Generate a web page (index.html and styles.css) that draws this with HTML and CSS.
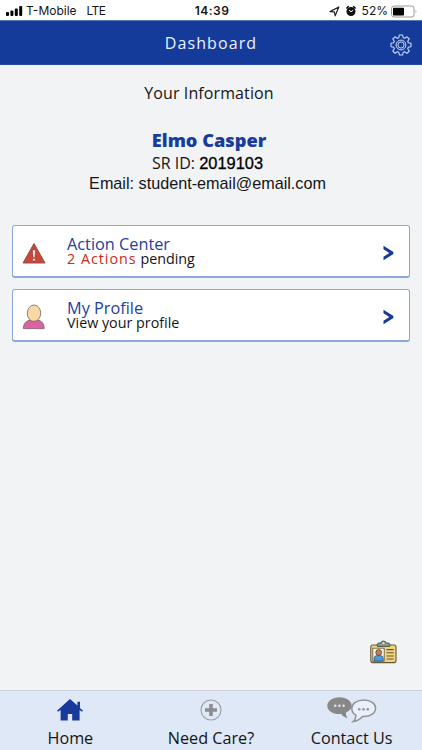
FILE: index.html
```
<!DOCTYPE html>
<html lang="en">
<head>
  <meta charset="UTF-8">
  <meta name="viewport" content="width=device-width, initial-scale=1">
  <title>Dashboard</title>
  <link rel="stylesheet" href="styles.css">
</head>
<body>
  <!-- phone status bar -->
  <div class="status-bar">
    <div class="status-left">
      <svg class="signal" width="17" height="10" viewBox="0 0 17 10">
        <rect x="0" y="6" width="3" height="4" rx="1"/>
        <rect x="4.4" y="4.5" width="3" height="5.5" rx="1"/>
        <rect x="8.8" y="2.5" width="3" height="7.5" rx="1"/>
        <rect x="13.2" y="0" width="3" height="10" rx="1"/>
      </svg>
      <span class="carrier">T-Mobile</span>
      <span class="network">LTE</span>
    </div>
    <div class="time">14:39</div>
    <div class="status-right">
      <svg width="11" height="11" viewBox="0 0 11 11">
        <path d="M1 5.6 L9.8 1 L6.2 9.8 L5.3 5.9 Z" fill="none" stroke="#222" stroke-width="1.2" stroke-linejoin="round"/>
      </svg>
      <svg class="alarm" width="12" height="12" viewBox="0 0 12 12">
        <circle cx="6" cy="6.5" r="4.5" fill="#111"/>
        <path d="M1.8 3 L3.4 1.6 M10.2 3 L8.6 1.6" stroke="#111" stroke-width="1.5" stroke-linecap="round"/>
        <path d="M4 5 L6 6.8 L8.2 5.2" fill="none" stroke="#fff" stroke-width="1"/>
      </svg>
      <span class="percent">52%</span>
      <svg width="27" height="13" viewBox="0 0 27 13">
        <rect x="0.5" y="1" width="22.5" height="11" rx="2.5" fill="#fff" stroke="#999"/>
        <rect x="2" y="2.7" width="11" height="7.8" rx="0.8" fill="#000"/>
        <path d="M24.6 4.8 Q26.4 6.5 24.6 8.2 Z" fill="#999"/>
      </svg>
    </div>
  </div>

  <header class="header">
    <h1>Dashboard</h1>
    <svg class="gear" width="22" height="22" viewBox="0 0 22 22" fill="none" stroke="#c9d8f7">
      <path stroke-width="1.1" stroke-linejoin="round" d="M9.3 1 H12.7 L13.2 3.7 L14.7 4.3 L17 2.8 L19.3 5 L17.7 7.3 L18.3 8.8 L21 9.3 V12.7 L18.3 13.2 L17.7 14.7 L19.3 17 L17 19.3 L14.7 17.7 L13.2 18.3 L12.7 21 H9.3 L8.8 18.3 L7.3 17.7 L5 19.3 L2.8 17 L4.3 14.7 L3.7 13.2 L1 12.7 V9.3 L3.7 8.8 L4.3 7.3 L2.8 5 L5 2.8 L7.3 4.3 L8.8 3.7 Z"/>
      <circle cx="11" cy="11" r="4.9" stroke-width="1"/>
      <circle cx="11" cy="11" r="3.1" stroke-width="1"/>
    </svg>
  </header>

  <main class="content">
    <h2>Your Information</h2>
    <div class="name">Elmo Casper</div>
    <div class="sr-id">SR ID: <span class="id-number">2019103</span></div>
    <div class="email">Email: student-email@email.com</div>

    <div class="cards">
      <a class="card" href="#">
        <svg class="card-icon warning" width="24" height="26" viewBox="0 0 24 26">
          <path d="M12 3.5 L23 23 H1 Z" fill="#d0453a" stroke="#7a4a44" stroke-width="0.9" stroke-linejoin="round"/>
          <path d="M10.6 10 H13.4 L12.9 17.4 H11.1 Z" fill="#fff" stroke="#7a3a34" stroke-width="0.5"/>
          <circle cx="12" cy="19.7" r="1.3" fill="#fff" stroke="#7a3a34" stroke-width="0.4"/>
        </svg>
        <div class="card-text">
          <div class="card-title">Action Center</div>
          <div class="card-sub"><span class="alert">2 Actions</span> pending</div>
        </div>
        <svg class="chevron" width="11" height="16" viewBox="0 0 11 16">
          <path d="M0.5 0.8 L10.4 7 V9 L0.5 15.2 V11.8 L6.3 8 L0.5 4.2 Z"/>
        </svg>
      </a>

      <a class="card" href="#">
        <svg class="card-icon person" width="24" height="26" viewBox="0 0 24 26" stroke="#77605c" stroke-width="0.8">
          <path d="M1.3 24.6 C1.3 19.5 4.5 16.6 8.5 16 H15.5 C19.5 16.6 22.2 19.5 22.2 24.6 Z" fill="#dc62a4"/>
          <ellipse cx="12" cy="9.2" rx="6.7" ry="8.2" fill="#f8d9a5"/>
        </svg>
        <div class="card-text">
          <div class="card-title">My Profile</div>
          <div class="card-sub">View your profile</div>
        </div>
        <svg class="chevron" width="11" height="16" viewBox="0 0 11 16">
          <path d="M0.5 0.8 L10.4 7 V9 L0.5 15.2 V11.8 L6.3 8 L0.5 4.2 Z"/>
        </svg>
      </a>
    </div>

    <!-- ID card shortcut -->
    <svg class="badge" width="27" height="24" viewBox="0 0 27 24">
      <rect x="0.8" y="5" width="25.2" height="17.6" rx="2" fill="#f1d47c" stroke="#66583d" stroke-width="1.1"/>
      <rect x="2.8" y="8.2" width="11.4" height="13" fill="#f4f3ee" stroke="#66583d" stroke-width="0.8"/>
      <path d="M4 21 V18 Q4.3 15.8 6.8 15.6 H10.6 Q13 15.8 13.2 18 V21 Z" fill="#4c9add" stroke="#31506e" stroke-width="0.7"/>
      <circle cx="8.7" cy="12.5" r="2.9" fill="#bd8058" stroke="#59402f" stroke-width="0.8"/>
      <path d="M16.5 9.6 H23.7 M16.5 12.8 H23.7 M16.5 16 H23.7 M16.5 19 H23.7" stroke="#66583d" stroke-width="1.1"/>
      <path d="M7.2 6.4 V4.4 Q7.3 3.2 9 3 H10.8 Q11.3 1 13.5 1 T16.2 3 H18 Q19.7 3.2 19.8 4.4 V6.4 Z" fill="#829f86" stroke="#4b5548" stroke-width="1"/>
      <circle cx="13.5" cy="3.3" r="1" fill="#e9eee9"/>
    </svg>
  </main>

  <nav class="tabs">
    <a class="tab" href="#">
      <svg width="26" height="22" viewBox="0 0 26 22" fill="#173a9c">
        <path d="M13 0 L20.4 6.6 V2.8 H23 V9 L26 11.7 L25 12.8 L22.6 11 V21.5 H15.2 V15 H10.8 V21.5 H3.6 V11 L1 12.8 L0 11.7 Z"/>
      </svg>
      <span>Home</span>
    </a>
    <a class="tab" href="#">
      <svg width="22" height="22" viewBox="0 0 22 22">
        <circle cx="11" cy="11" r="10" fill="none" stroke="#999ca1" stroke-width="1.1"/>
        <path d="M9.2 5 H12.8 V9.2 H17 V12.8 H12.8 V17 H9.2 V12.8 H5 V9.2 H9.2 Z" fill="#8c8d90"/>
      </svg>
      <span>Need Care?</span>
    </a>
    <a class="tab" href="#">
      <svg class="chat" width="50" height="26" viewBox="0 0 50 26">
        <path d="M12.5 0.3 C19.3 0.3 24.7 4 24.7 8.8 C24.7 11.4 22.8 13.8 19 15.6 C18.6 17.6 19.4 19.8 20.8 21 C17.8 20.5 15.4 19 14.2 17 C6.5 17.8 0.3 14 0.3 8.8 C0.3 4 5.7 0.3 12.5 0.3 Z" fill="#888"/>
        <path d="M36.8 3 C43.6 3 48.6 6.6 48.6 11.2 C48.6 16.2 43 20 35.6 19.4 C33 22.3 29.8 24 26.2 24.6 C28 23 28.9 20.6 28.9 18.2 C26.2 16.6 24.8 14.2 24.8 11.2 C24.8 6.6 30 3 36.8 3 Z" fill="#e9f0f8" stroke="#909398" stroke-width="1.5"/>
        <g fill="#dce5f0">
          <circle cx="8.2" cy="8.8" r="1.3"/><circle cx="12.4" cy="8.8" r="1.3"/><circle cx="16.6" cy="8.8" r="1.3"/>
        </g>
        <g fill="#909398">
          <circle cx="32.2" cy="12.3" r="1.3"/><circle cx="36.5" cy="12.3" r="1.3"/><circle cx="40.8" cy="12.3" r="1.3"/>
        </g>
      </svg>
      <span>Contact Us</span>
    </a>
  </nav>
</body>
</html>
```
FILE: styles.css
```
* {
  box-sizing: border-box;
}

body {
  margin: 0;
  height: 750px;
  display: flex;
  flex-direction: column;
  background-color: #f1f3f5;
  font-family: "Open Sans", "Noto Sans", sans-serif;
  color: #151515;
  overflow: hidden;
}

h1, h2 {
  margin: 0;
  font-weight: normal;
}

a {
  color: inherit;
  text-decoration: none;
}

svg {
  display: block;
  flex: none;
}

/* status bar */
.status-bar {
  display: grid;
  grid-template-columns: 1fr auto 1fr;
  align-items: center;
  height: 20px;
  padding: 2px 4px 0 6px;
  background-color: #fff;
  font-family: Inter, sans-serif;
  font-size: 12px;
  line-height: 18px;
}

.status-left, .status-right {
  display: flex;
  align-items: center;
}

.status-right {
  justify-content: flex-end;
}

.carrier {
  margin-left: 3px;
}

.network {
  margin-left: 10px;
  letter-spacing: -0.6px;
}

.time {
  font-weight: 600;
  letter-spacing: 0.5px;
}

.alarm {
  margin-left: 5px;
}

.percent {
  margin: 0 3px 0 5px;
}

/* blue title bar */
.header {
  display: grid;
  grid-template-columns: 1fr auto 1fr;
  align-items: center;
  height: 45px;
  padding: 0 10px;
  background-color: #153b9a;
  border-top: 1px solid #5873b7;
  border-bottom: 1px solid #2a4ca4;
  color: #edf2ff;
}

.header h1 {
  grid-column: 2;
  font-size: 16px;
  line-height: 22px;
  letter-spacing: 1.1px;
}

.gear {
  justify-self: end;
  margin-top: 5px;
}

/* content */
.content {
  flex: 1;
  display: flex;
  flex-direction: column;
  padding: 16px 12px 0;
  text-align: center;
}

.content h2 {
  padding-right: 4px;
  font-size: 16px;
  line-height: 24px;
  letter-spacing: 0.1px;
}

.name {
  margin-top: 22px;
  padding-right: 4px;
  color: #173c9b;
  font-size: 18.2px;
  font-weight: 800;
  line-height: 26px;
}

.sr-id {
  font-size: 16px;
  line-height: 20px;
  padding-right: 7px;
}

.id-number {
  font-family: "Liberation Sans", Arial, sans-serif;
  font-size: 16.4px;
  color: #000;
  -webkit-text-stroke: 0.3px #000;
}

.email {
  font-family: "Liberation Sans", Arial, sans-serif;
  font-size: 16.2px;
  line-height: 20px;
  padding-right: 7px;
}

.cards {
  display: flex;
  flex-direction: column;
  gap: 11px;
  margin-top: 32px;
}

.card {
  display: flex;
  align-items: center;
  height: 53px;
  padding: 0 15px 0 9px;
  background-color: #fff;
  border: 1px solid #8ba9d8;
  border-bottom-width: 2px;
  border-radius: 3px;
  text-align: left;
}

.warning {
  margin-top: 4px;
}

.person {
  margin-top: 3px;
}

.card-text {
  flex: 1;
  margin-left: 21px;
}

.card-title {
  color: #1d409f;
  font-size: 16.3px;
  line-height: 16px;
}

.card-sub {
  font-size: 14.3px;
  line-height: 14px;
}

.alert {
  color: #cc2a22;
  letter-spacing: 1px;
}

.chevron {
  fill: #173a94;
  margin-top: 4px;
}

.badge {
  align-self: flex-end;
  margin: auto 13px 26px 0;
}

/* bottom tabs */
.tabs {
  display: grid;
  grid-template-columns: repeat(3, 1fr);
  height: 60px;
  background-color: #dee8f6;
  border-top: 1px solid #c9d0da;
}

.tab {
  display: flex;
  flex-direction: column;
  justify-content: space-between;
  align-items: center;
  padding-top: 8px;
  font-size: 16.2px;
  line-height: 24px;
}

.chat {
  margin-top: -2px;
}
```
